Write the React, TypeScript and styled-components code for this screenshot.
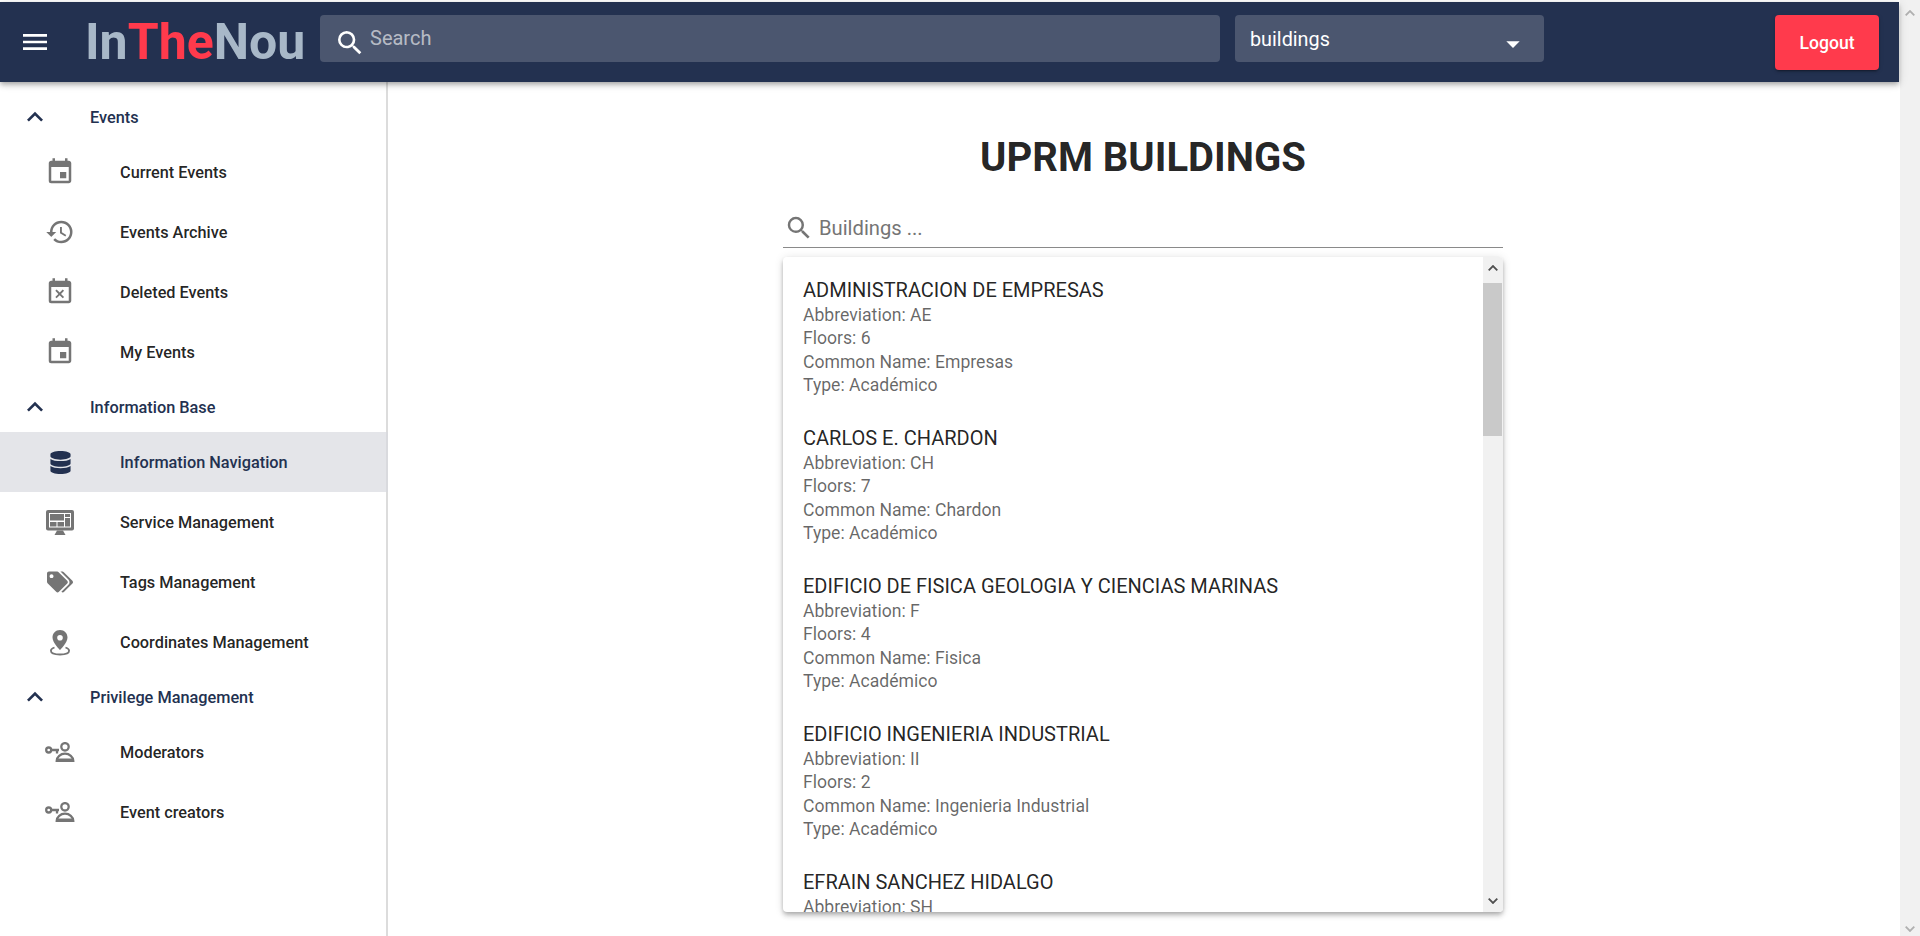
import React from "react";
import styled, { createGlobalStyle } from "styled-components";
import { MdEvent, MdHistory, MdEventBusy, MdSearch, MdMenu, MdExpandLess, MdArrowDropDown } from "react-icons/md";
import { FaDatabase, FaTags } from "react-icons/fa";

const Global = createGlobalStyle`
  html, body { margin: 0; padding: 0; height: 100%; overflow: hidden; background: #fff; }
  body { font-family: Roboto, "Liberation Sans", sans-serif; color: rgba(0,0,0,.87); }
  #root { height: 100%; }
`;

const Page = styled.div`
  display: flex;
  height: 936px;
  width: 1920px;
  overflow: hidden;
`;
const Viewport = styled.div`
  flex: 1;
  min-width: 0;
  display: flex;
  flex-direction: column;
  padding-top: 2px;
`;
const TopBar = styled.header`
  height: 80px;
  flex: none;
  margin-right: 1px;
  background: #233150;
  display: flex;
  align-items: flex-start;
  box-shadow: 0 2px 4px -1px rgba(0,0,0,.2), 0 4px 5px 0 rgba(0,0,0,.14), 0 1px 10px 0 rgba(0,0,0,.12);
  position: relative;
  z-index: 2;
`;
const MenuButton = styled.div`
  width: 85px;
  height: 80px;
  padding-left: 19px;
  box-sizing: border-box;
  display: flex;
  align-items: center;
  color: #fff;
  flex: none;
`;
const Logo = styled.div`
  width: 235px;
  flex: none;
  font-size: 50px;
  line-height: 80px;
  font-weight: 700;
  color: #a8b8c8;
  white-space: nowrap;
`;
const LogoAccent = styled.span`
  color: #ff3a4c;
`;
const SearchBox = styled.div`
  width: 900px;
  height: 47px;
  margin-top: 13px;
  flex: none;
  border-radius: 4px;
  background: #4b566f;
  display: flex;
  align-items: center;
  color: #fff;
  padding-left: 14px;
  box-sizing: border-box;
  gap: 4px;
`;
const SearchGlyph = styled(MdSearch)`
  margin-top: 9px;
  flex: none;
`;
const SearchText = styled.span`
  font-size: 20px;
  color: rgba(255,255,255,.62);
  margin-top: -2px;
`;
const SelectBox = styled.div`
  width: 309px;
  height: 47px;
  margin: 13px 0 0 15px;
  flex: none;
  border-radius: 4px;
  background: #4b566f;
  display: flex;
  align-items: center;
  justify-content: space-between;
  color: #fff;
  padding: 0 15px;
  box-sizing: border-box;
  font-size: 19.8px;
`;
const SelectValue = styled.span`
  margin-top: 2px;
`;
const SelectCaret = styled(MdArrowDropDown)`
  margin-top: 10px;
  flex: none;
`;
const LogoutButton = styled.div`
  width: 104px;
  height: 55px;
  margin: 13px 0 0 231px;
  flex: none;
  border-radius: 4px;
  background: #ff3a4c;
  color: #fff;
  display: flex;
  align-items: center;
  justify-content: center;
  font-size: 17.6px;
  font-weight: 500;
  box-shadow: 0 3px 1px -2px rgba(0,0,0,.2), 0 2px 2px 0 rgba(0,0,0,.14), 0 1px 5px 0 rgba(0,0,0,.12);
`;
const Body = styled.div`
  flex: 1;
  min-height: 0;
  display: flex;
`;
const Drawer = styled.nav`
  width: 388px;
  flex: none;
  box-sizing: border-box;
  border-right: 2px solid #dcdcdc;
  padding-top: 10px;
`;
const SectionRow = styled.div`
  height: 50px;
  display: flex;
  align-items: center;
  color: #233150;
  font-size: 16.3px;
  font-weight: 500;
`;
const SectionIcon = styled.span`
  width: 90px;
  padding-left: 19px;
  box-sizing: border-box;
  display: flex;
  flex: none;
`;
const ItemRow = styled.div<{ $active?: boolean }>`
  height: 60px;
  display: flex;
  align-items: center;
  font-size: 16.3px;
  font-weight: 500;
  background: ${(p) => (p.$active ? "#e4e5e9" : "transparent")};
  color: ${(p) => (p.$active ? "#233150" : "rgba(0,0,0,.87)")};
  margin-right: ${(p) => (p.$active ? "-2px" : "0")};
  border-right: ${(p) => (p.$active ? "2px solid #d9dade" : "none")};
`;
const ItemIcon = styled.span<{ $active?: boolean }>`
  width: 120px;
  flex: none;
  display: flex;
  justify-content: center;
  color: ${(p) => (p.$active ? "#233150" : "#757575")};
`;
const Main = styled.main`
  flex: 1;
  min-width: 0;
  display: flex;
  flex-direction: column;
  align-items: center;
  padding: 49px 2px 0 0;
`;
const Title = styled.h1`
  margin: 0;
  font-size: 40px;
  line-height: 54px;
  font-weight: 700;
  color: rgba(0,0,0,.87);
`;
const Finder = styled.div`
  width: 720px;
  height: 47px;
  margin-top: 16px;
  box-sizing: border-box;
  border-bottom: 1px solid #8a8a8a;
  display: flex;
  align-items: center;
  padding: 7px 0 0 1px;
  color: #757575;
  font-size: 20.2px;
  gap: 5px;
`;
const Panel = styled.section`
  width: 720px;
  height: 655px;
  margin-top: 9px;
  display: flex;
  border-radius: 4px;
  overflow: hidden;
  box-shadow: 0 2px 4px -1px rgba(0,0,0,.2), 0 4px 5px 0 rgba(0,0,0,.14), 0 1px 10px 0 rgba(0,0,0,.12);
`;
const List = styled.div`
  flex: 1;
  min-width: 0;
  overflow: hidden;
  padding-top: 20px;
  box-sizing: border-box;
`;
const Building = styled.article`
  padding: 0 20px;
  height: 148px;
  box-sizing: border-box;
`;
const BuildingName = styled.div`
  font-size: 20px;
  line-height: 26px;
  margin-bottom: 1px;
  color: rgba(0,0,0,.87);
`;
const BuildingLine = styled.div`
  font-size: 17.6px;
  line-height: 23.4px;
  color: rgba(0,0,0,.6);
`;
const ScrollTrack = styled.div`
  width: 20px;
  flex: none;
  background: #f1f1f1;
  display: flex;
  flex-direction: column;
`;
const ScrollArrow = styled.div<{ $height: number }>`
  height: ${(p) => p.$height}px;
  display: flex;
  align-items: center;
  justify-content: center;
  flex: none;
`;
const ScrollThumb = styled.div`
  width: 19px;
  height: 153px;
  margin-top: 4px;
  background: #c9c9c9;
  flex: none;
`;
const ScrollSpace = styled.div`
  flex: 1;
`;

const Arrow = ({ up, color }: { up?: boolean; color: string }) => (
  <svg width="10" height="6" viewBox="0 0 10 6">
    <path d={up ? "M.7 5.3L5 1l4.3 4.3" : "M.7.7L5 5 9.3.7"} fill="none" stroke={color} strokeWidth="1.8" />
  </svg>
);

const ServiceIcon = () => (
  <svg width="28" height="25" viewBox="0 0 28 25">
    <rect width="28" height="20.5" rx="2" fill="currentColor" />
    <rect x="3" y="3" width="22" height="14.5" fill="#fff" />
    <path fill="currentColor" d="M4 4h14v6.5H4zM19 4h5v3h-5zM19 8h5v8.5h-5zM4 12h6.5v4.5H4zM11.5 12H18v4.5h-6.5z" />
    <path fill="currentColor" d="M11 20.5h6l2.5 4.5h-11z" />
  </svg>
);

const PinIcon = () => (
  <svg width="24" height="27" viewBox="0 0 24 27" fill="currentColor">
    <path
      fillRule="evenodd"
      d="M12 1C7.6 1 4.5 4.4 4.5 8.5 4.5 14 12 21 12 21s7.5-7 7.500-12.500C19.500 4.400 16.400 1 12 1zm0 5a2.800 2.800 0 1 1 0 5.600A2.800 2.800 0 0 1 12 6z"
    />
    <path
      fill="none"
      stroke="currentColor"
      strokeWidth="1.8"
      d="M6.500 18.500C4 19.300 2.900 20.500 2.900 21.800c0 2.300 4 3.700 9.100 3.700s9.100-1.400 9.100-3.700c0-1.300-1.100-2.500-3.600-3.300"
    />
  </svg>
);

const KeyPersonIcon = () => (
  <svg width="30" height="20" viewBox="0 0 30 20" fill="none" stroke="currentColor" strokeWidth="2.3">
    <circle cx="20" cy="4.800" r="3.700" />
    <path d="M11.700 19c0-4.200 3.800-7.300 8.300-7.300s8.300 3.100 8.300 7.300z" />
    <path d="M11 16.500h18V20H11z" fill="currentColor" stroke="none" />
    <circle cx="3.700" cy="8" r="2.500" />
    <path d="M6 8h8M12 8v3.500" />
  </svg>
);

type Item = { label: string; icon: React.ReactNode; active?: boolean };

const groups: { title: string; items: Item[] }[] = [
  {
    title: "Events",
    items: [
      { label: "Current Events", icon: <MdEvent size={30} /> },
      { label: "Events Archive", icon: <MdHistory size={30} /> },
      { label: "Deleted Events", icon: <MdEventBusy size={30} /> },
      { label: "My Events", icon: <MdEvent size={30} /> },
    ],
  },
  {
    title: "Information Base",
    items: [
      { label: "Information Navigation", icon: <FaDatabase size={23} />, active: true },
      { label: "Service Management", icon: <ServiceIcon /> },
      { label: "Tags Management", icon: <FaTags size={26} /> },
      { label: "Coordinates Management", icon: <PinIcon /> },
    ],
  },
  {
    title: "Privilege Management",
    items: [
      { label: "Moderators", icon: <KeyPersonIcon /> },
      { label: "Event creators", icon: <KeyPersonIcon /> },
    ],
  },
];

type BuildingData = { name: string; abbr: string; floors?: number; common?: string; type?: string };

const buildings: BuildingData[] = [
  { name: "ADMINISTRACION DE EMPRESAS", abbr: "AE", floors: 6, common: "Empresas", type: "Académico" },
  { name: "CARLOS E. CHARDON", abbr: "CH", floors: 7, common: "Chardon", type: "Académico" },
  { name: "EDIFICIO DE FISICA GEOLOGIA Y CIENCIAS MARINAS", abbr: "F", floors: 4, common: "Fisica", type: "Académico" },
  { name: "EDIFICIO INGENIERIA INDUSTRIAL", abbr: "II", floors: 2, common: "Ingenieria Industrial", type: "Académico" },
  { name: "EFRAIN SANCHEZ HIDALGO", abbr: "SH" },
];

export default function App() {
  return (
    <Page>
      <Global />
      <Viewport>
        <TopBar>
          <MenuButton><MdMenu size={32} /></MenuButton>
          <Logo>In<LogoAccent>The</LogoAccent>Nou</Logo>
          <SearchBox>
            <SearchGlyph size={32} />
            <SearchText>Search</SearchText>
          </SearchBox>
          <SelectBox>
            <SelectValue>buildings</SelectValue>
            <SelectCaret size={32} />
          </SelectBox>
          <LogoutButton>Logout</LogoutButton>
        </TopBar>
        <Body>
          <Drawer>
            {groups.map((g) => (
              <React.Fragment key={g.title}>
                <SectionRow>
                  <SectionIcon><MdExpandLess size={32} /></SectionIcon>
                  {g.title}
                </SectionRow>
                {g.items.map((it) => (
                  <ItemRow key={it.label} $active={it.active}>
                    <ItemIcon $active={it.active}>{it.icon}</ItemIcon>
                    {it.label}
                  </ItemRow>
                ))}
              </React.Fragment>
            ))}
          </Drawer>
          <Main>
            <Title>UPRM BUILDINGS</Title>
            <Finder>
              <MdSearch size={30} />
              Buildings ...
            </Finder>
            <Panel>
              <List>
                {buildings.map((b) => (
                  <Building key={b.name}>
                    <BuildingName>{b.name}</BuildingName>
                    <BuildingLine>Abbreviation: {b.abbr}</BuildingLine>
                    {b.floors !== undefined && <BuildingLine>Floors: {b.floors}</BuildingLine>}
                    {b.common && <BuildingLine>Common Name: {b.common}</BuildingLine>}
                    {b.type && <BuildingLine>Type: {b.type}</BuildingLine>}
                  </Building>
                ))}
              </List>
              <ScrollTrack>
                <ScrollArrow $height={22}><Arrow up color="#505050" /></ScrollArrow>
                <ScrollThumb />
                <ScrollSpace />
                <ScrollArrow $height={22}><Arrow color="#505050" /></ScrollArrow>
              </ScrollTrack>
            </Panel>
          </Main>
        </Body>
      </Viewport>
      <ScrollTrack>
        <ScrollArrow $height={26}><Arrow up color="#b0b0b0" /></ScrollArrow>
        <ScrollSpace />
        <ScrollArrow $height={14}><Arrow color="#b0b0b0" /></ScrollArrow>
      </ScrollTrack>
    </Page>
  );
}
